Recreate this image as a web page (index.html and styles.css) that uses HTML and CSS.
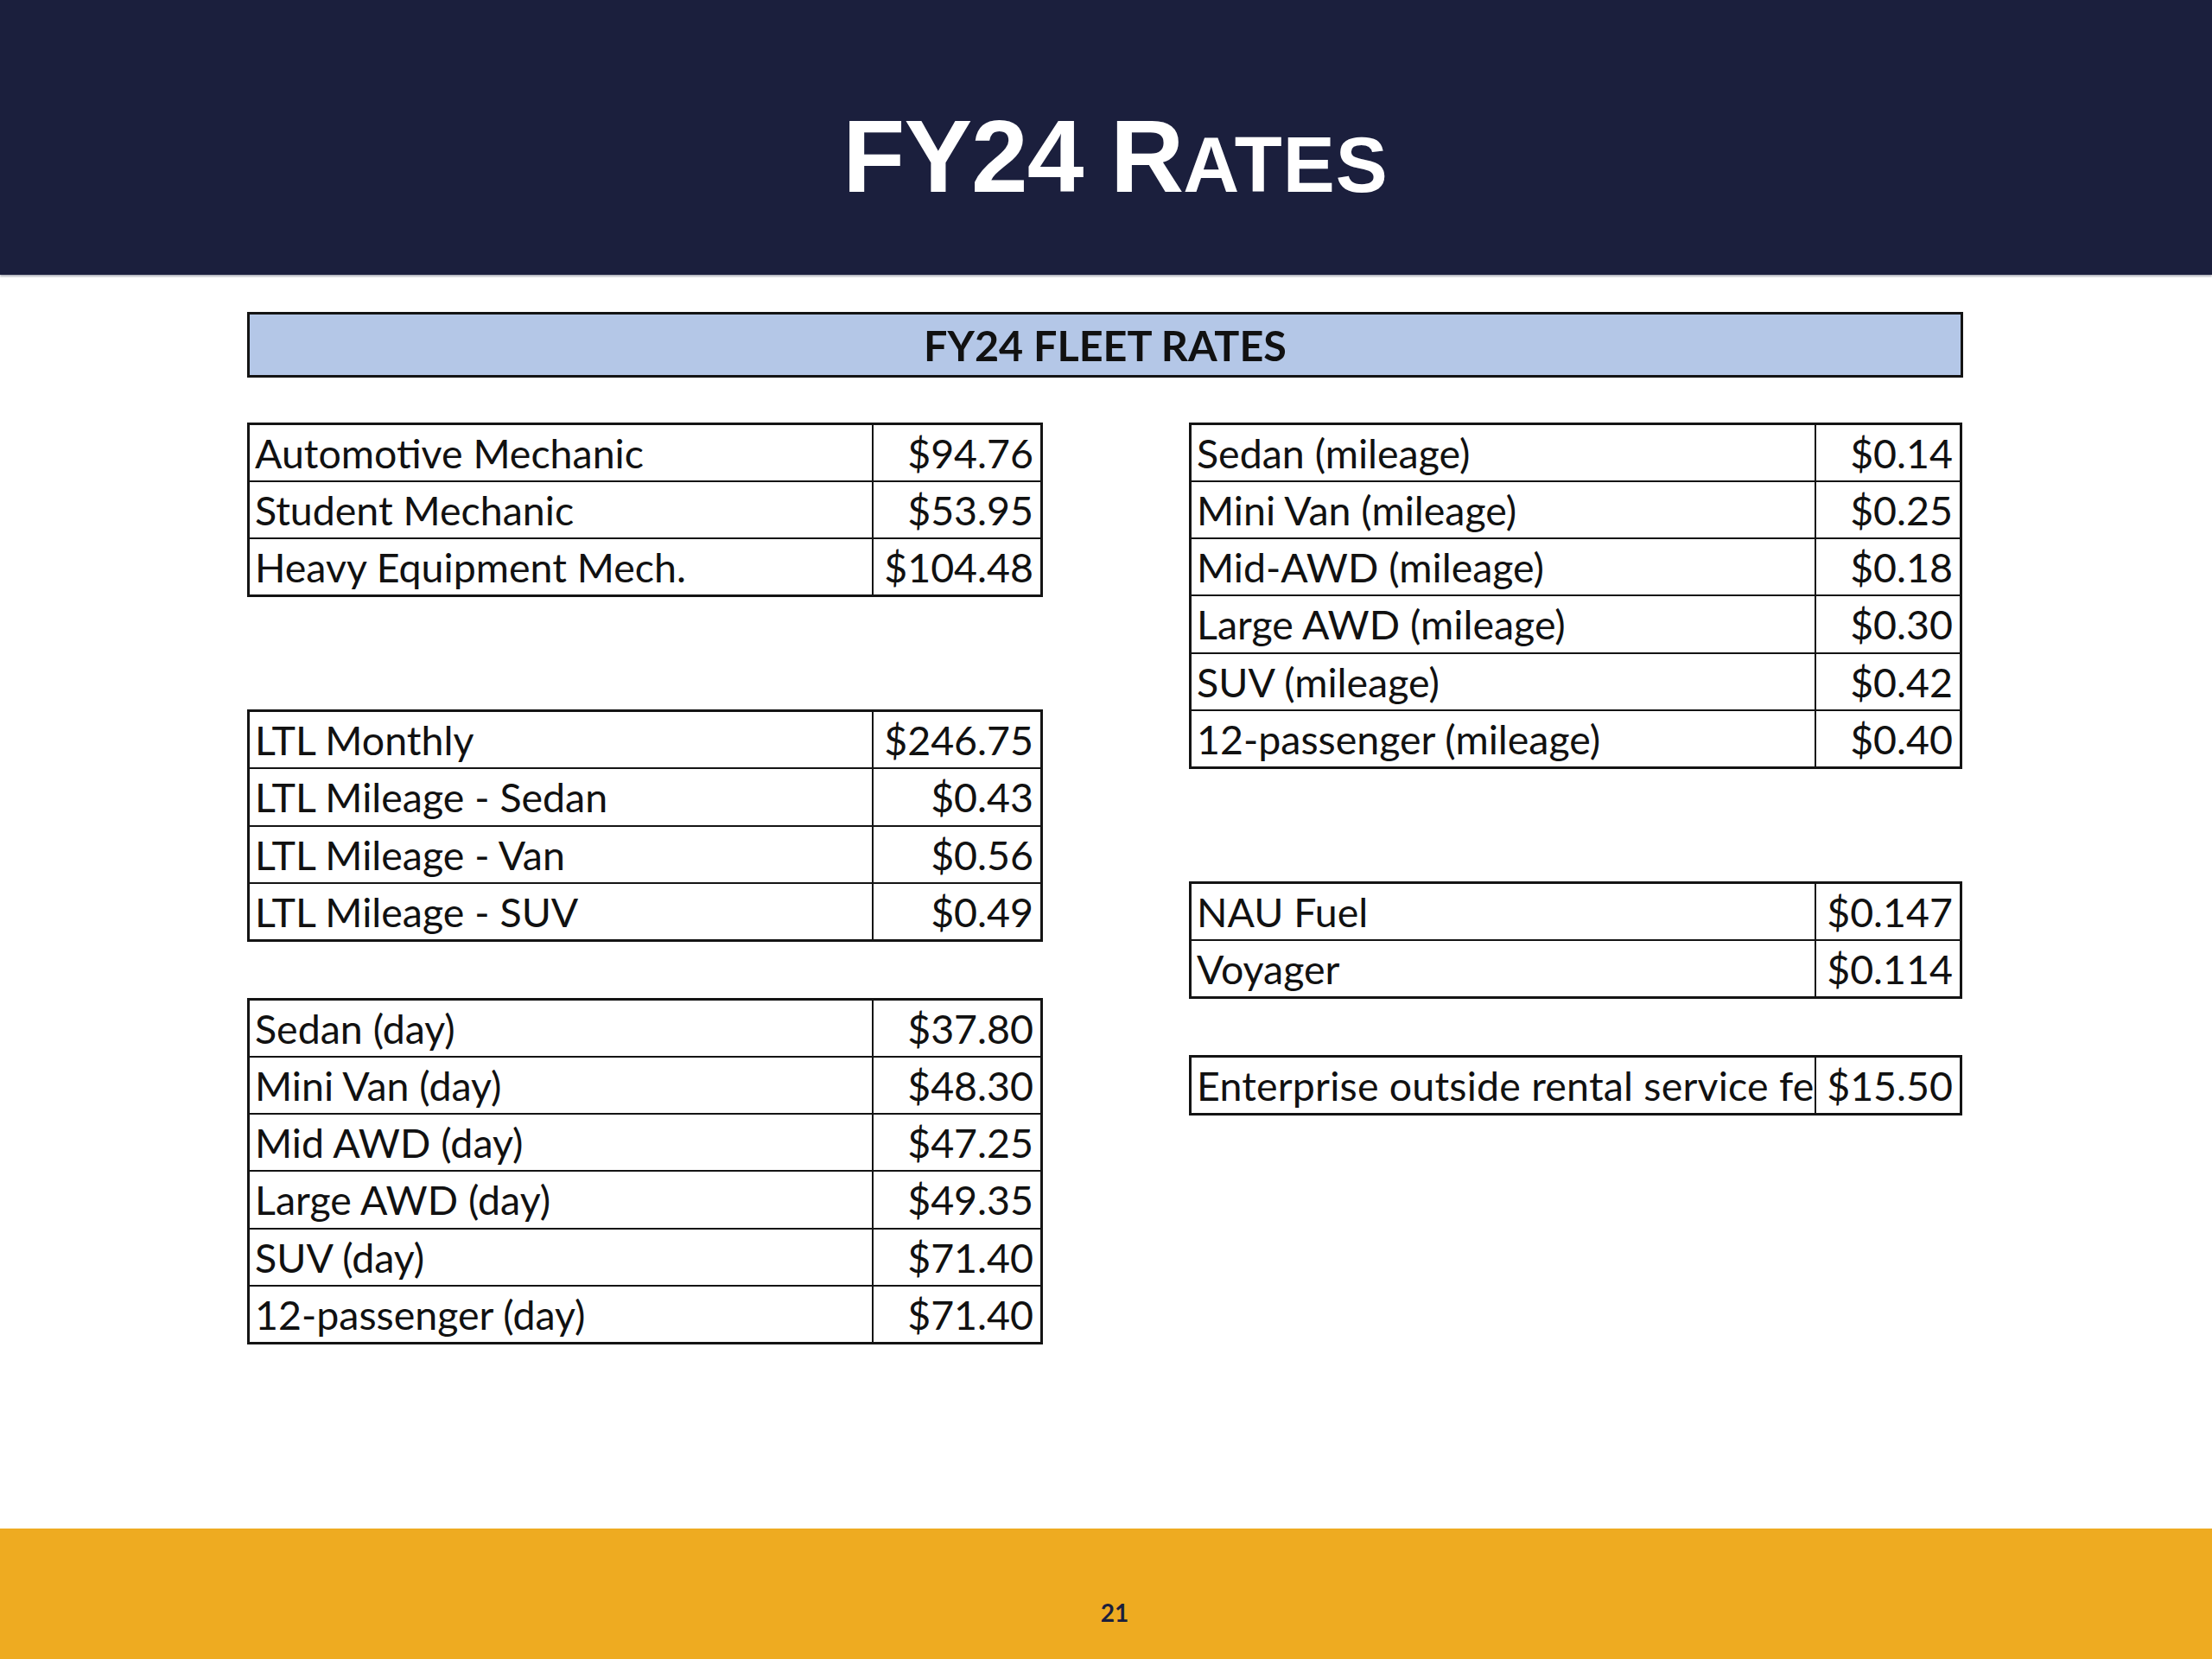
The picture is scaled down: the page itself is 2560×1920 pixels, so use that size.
FILE: index.html
```html
<!DOCTYPE html>
<html lang="en">
<head>
<meta charset="utf-8">
<title>FY24 Rates</title>
<link rel="stylesheet" href="styles.css">
</head>
<body>
<div class="slide">
  <header class="header">
    <h1 class="title">FY24 R<span class="sc">ATES</span></h1>
  </header>
  <main class="content">
    <div class="banner">FY24 FLEET RATES</div>
    <div class="columns">
      <div class="col col-left">
        <div class="sheet">
          <div class="row"><div class="label">Automotive Mechanic</div><div class="value">$94.76</div></div>
          <div class="row"><div class="label">Student Mechanic</div><div class="value">$53.95</div></div>
          <div class="row"><div class="label">Heavy Equipment Mech.</div><div class="value">$104.48</div></div>
        </div>
        <div class="spacer two"></div>
        <div class="sheet">
          <div class="row"><div class="label">LTL Monthly</div><div class="value">$246.75</div></div>
          <div class="row"><div class="label">LTL Mileage - Sedan</div><div class="value">$0.43</div></div>
          <div class="row"><div class="label">LTL Mileage - Van</div><div class="value">$0.56</div></div>
          <div class="row"><div class="label">LTL Mileage - SUV</div><div class="value">$0.49</div></div>
        </div>
        <div class="spacer one"></div>
        <div class="sheet">
          <div class="row"><div class="label">Sedan (day)</div><div class="value">$37.80</div></div>
          <div class="row"><div class="label">Mini Van (day)</div><div class="value">$48.30</div></div>
          <div class="row"><div class="label">Mid AWD (day)</div><div class="value">$47.25</div></div>
          <div class="row"><div class="label">Large AWD (day)</div><div class="value">$49.35</div></div>
          <div class="row"><div class="label">SUV (day)</div><div class="value">$71.40</div></div>
          <div class="row"><div class="label">12-passenger (day)</div><div class="value">$71.40</div></div>
        </div>
      </div>
      <div class="col col-right">
        <div class="sheet">
          <div class="row"><div class="label">Sedan (mileage)</div><div class="value">$0.14</div></div>
          <div class="row"><div class="label">Mini Van (mileage)</div><div class="value">$0.25</div></div>
          <div class="row"><div class="label">Mid-AWD (mileage)</div><div class="value">$0.18</div></div>
          <div class="row"><div class="label">Large AWD (mileage)</div><div class="value">$0.30</div></div>
          <div class="row"><div class="label">SUV (mileage)</div><div class="value">$0.42</div></div>
          <div class="row"><div class="label">12-passenger (mileage)</div><div class="value">$0.40</div></div>
        </div>
        <div class="spacer two"></div>
        <div class="sheet">
          <div class="row"><div class="label">NAU Fuel</div><div class="value">$0.147</div></div>
          <div class="row"><div class="label">Voyager</div><div class="value">$0.114</div></div>
        </div>
        <div class="spacer one"></div>
        <div class="sheet">
          <div class="row"><div class="label clip">Enterprise outside rental service fee</div><div class="value">$15.50</div></div>
        </div>
      </div>
    </div>
  </main>
  <footer class="footer">
    <span class="page-num">21</span>
  </footer>
</div>
</body>
</html>
```

FILE: styles.css
```css
* { box-sizing: border-box; }

html, body {
  margin: 0;
  padding: 0;
  background: #ffffff;
}

.slide {
  width: 2560px;
  height: 1920px;
  display: flex;
  flex-direction: column;
  overflow: hidden;
}

.header {
  height: 318px;
  flex: none;
  background: #1b1f3d;
  box-shadow: 0 2px 2px rgba(27, 31, 61, 0.35);
  padding-top: 122px;
  padding-left: 22px;
  text-align: center;
}

.title {
  margin: 0;
  font-family: "Liberation Sans", Arial, sans-serif;
  font-weight: 700;
  font-size: 118px;
  line-height: 1;
  letter-spacing: -1px;
  color: #ffffff;
}

.title .sc {
  font-size: 90px;
  letter-spacing: 1px;
}

.content {
  flex: 1;
  padding-top: 43px;
  padding-left: 286px;
}

.banner {
  width: 1986px;
  height: 76px;
  border: 3px solid #141414;
  background: #b4c7e7;
  display: flex;
  align-items: center;
  justify-content: center;
  font-family: Lato, "Open Sans", sans-serif;
  font-weight: 700;
  font-size: 48.5px;
  color: #111111;
}

.columns {
  margin-top: 52px;
  display: flex;
  gap: 169px;
}

.col {
  display: flex;
  flex-direction: column;
}

.col-left { width: 921px; }
.col-right { width: 895px; }

.spacer.one { height: 65px; }
.spacer.two { height: 130px; }

.sheet {
  border: 3px solid #141414;
  font-family: Lato, "Open Sans", sans-serif;
  font-size: 46.5px;
  color: #111111;
}

.row {
  display: flex;
  height: 64px;
}

.row + .row {
  border-top: 2px solid #141414;
  height: 66.2px;
}

.label {
  flex: none;
  display: flex;
  align-items: center;
  padding-left: 6px;
  border-right: 2px solid #141414;
  white-space: nowrap;
  overflow: hidden;
}

.label.clip {
  letter-spacing: 0.2px;
}

.col-left .label { width: 722px; }
.col-right .label { width: 723px; }

.value {
  flex: 1;
  display: flex;
  align-items: center;
  justify-content: flex-end;
  padding-right: 8px;
  white-space: nowrap;
}

.footer {
  height: 151px;
  flex: none;
  background: #eeab21;
  padding-left: 20px;
  padding-top: 83px;
  text-align: center;
}

.page-num {
  font-family: Lato, "Open Sans", sans-serif;
  font-weight: 700;
  font-size: 28px;
  line-height: 1;
  color: #1b1f3d;
}
```
